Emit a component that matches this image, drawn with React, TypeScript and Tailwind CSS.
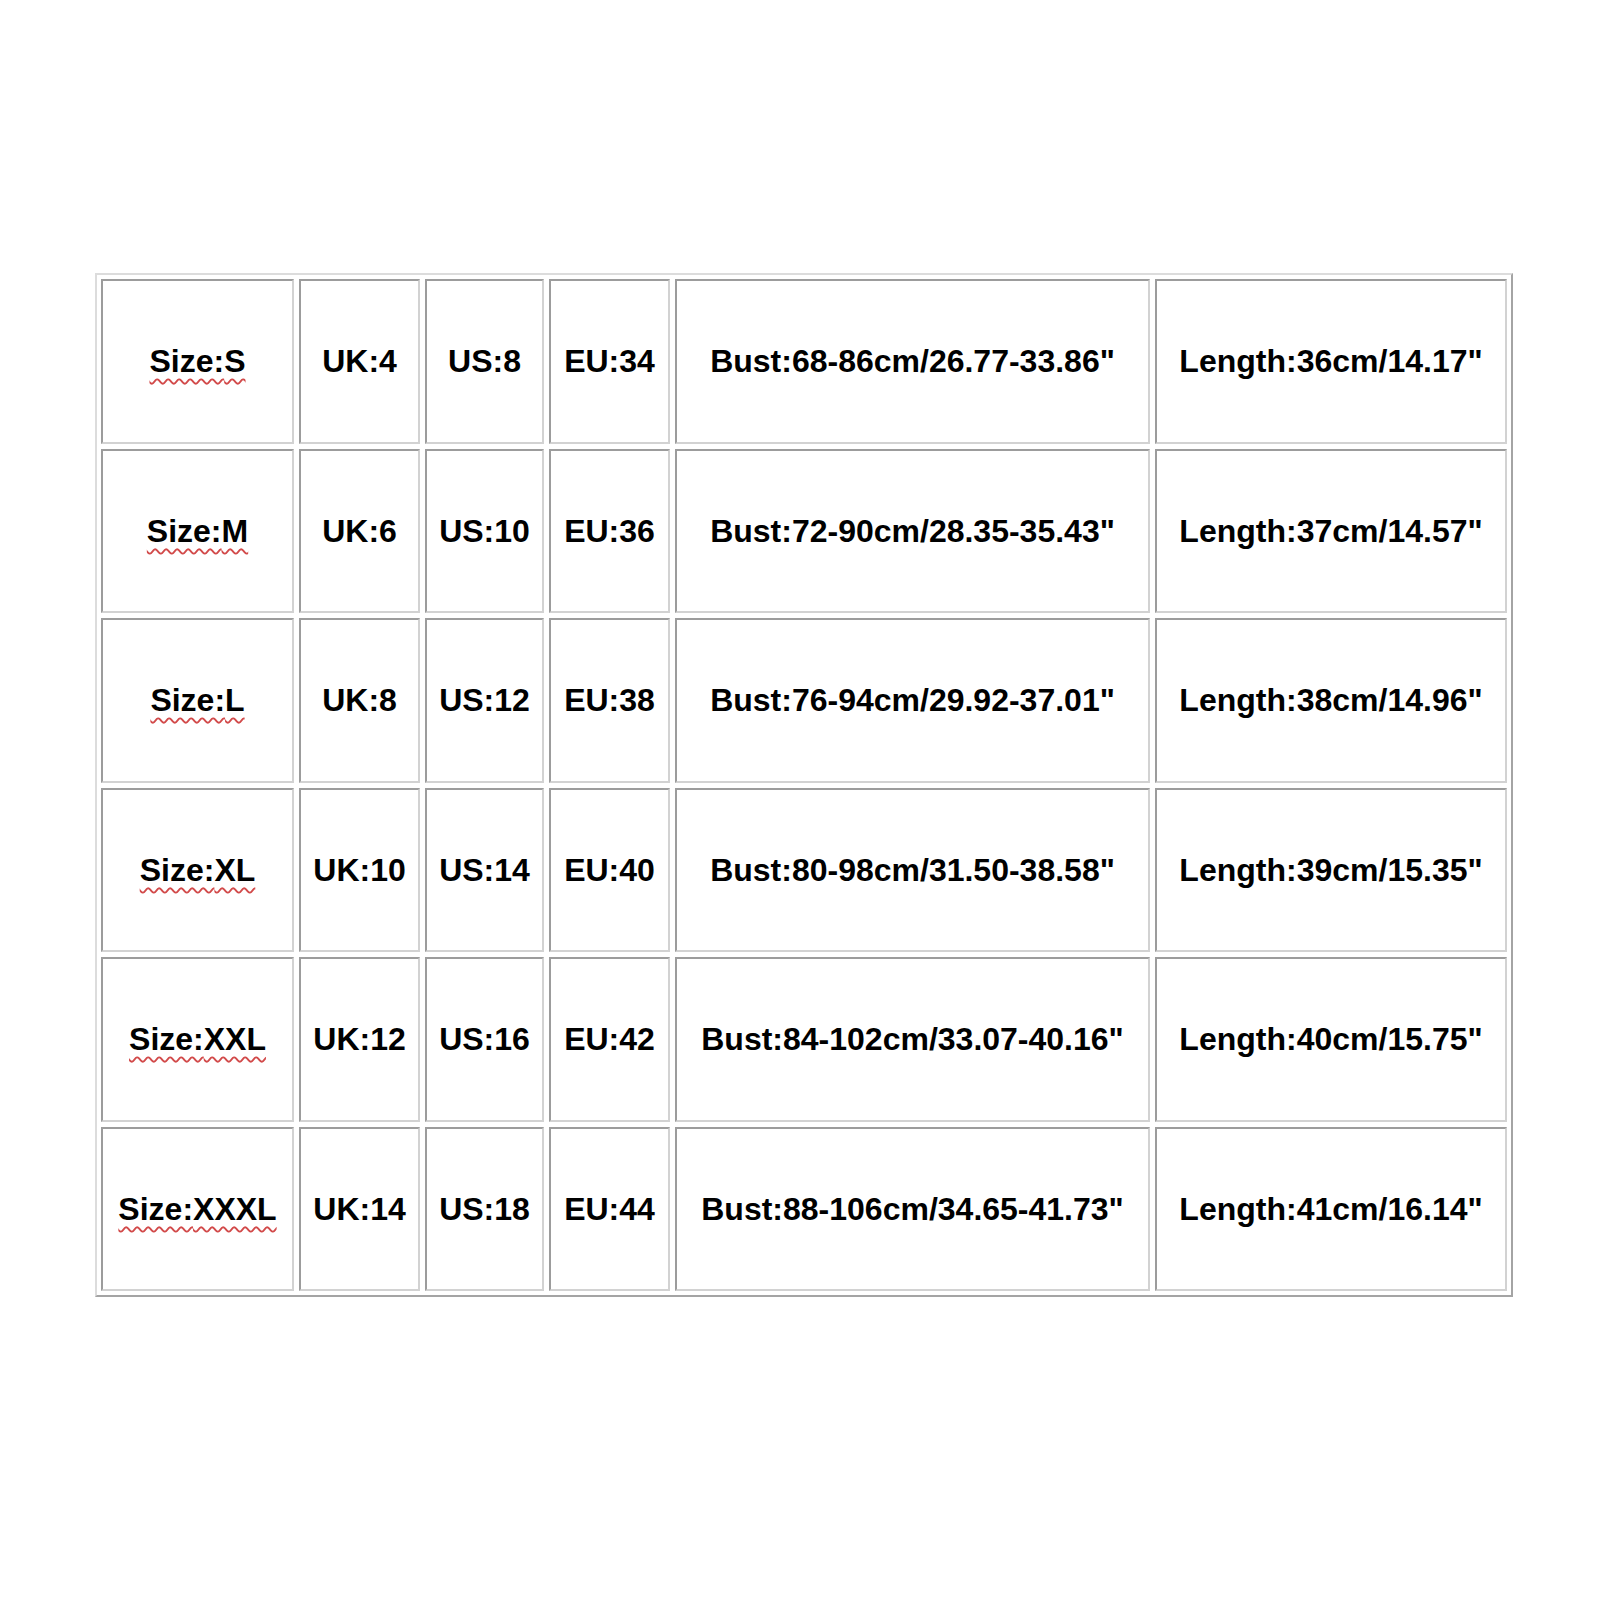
import React from 'react';

const rows = [
  ['S', 'UK:4', 'US:8', 'EU:34', 'Bust:68-86cm/26.77-33.86"', 'Length:36cm/14.17"'],
  ['M', 'UK:6', 'US:10', 'EU:36', 'Bust:72-90cm/28.35-35.43"', 'Length:37cm/14.57"'],
  ['L', 'UK:8', 'US:12', 'EU:38', 'Bust:76-94cm/29.92-37.01"', 'Length:38cm/14.96"'],
  ['XL', 'UK:10', 'US:14', 'EU:40', 'Bust:80-98cm/31.50-38.58"', 'Length:39cm/15.35"'],
  ['XXL', 'UK:12', 'US:16', 'EU:42', 'Bust:84-102cm/33.07-40.16"', 'Length:40cm/15.75"'],
  ['XXXL', 'UK:14', 'US:18', 'EU:44', 'Bust:88-106cm/34.65-41.73"', 'Length:41cm/16.14"'],
];

const cell =
  'flex items-center justify-center border-2 border-t-[#9c9c9c] border-l-[#9c9c9c] border-r-[#d2d2d2] border-b-[#d2d2d2] bg-white';

export default function App() {
  return (
    <div className="w-[1600px] h-[1600px] bg-white pt-[273px] pl-[95px] font-['Liberation_Sans',Arial,sans-serif] font-bold text-[32px] text-black">
      {/* size chart */}
      <div className="inline-block border-2 border-t-[#dcdcdc] border-l-[#dcdcdc] border-r-[#a4a4a4] border-b-[#a4a4a4] p-[4px]">
        <div className="grid grid-cols-[193px_121px_119px_121px_475px_352px] auto-rows-[164.5px] gap-[5px]">
          {rows.map(r => (
            <React.Fragment key={r[0]}>
              <div className={cell}>
                <span className="underline decoration-wavy decoration-[#d24a4a] decoration-[1.5px] underline-offset-[6px]">
                  Size:{r[0]}
                </span>
              </div>
              {r.slice(1).map((v, i) => (
                <div key={i} className={cell}>
                  {v}
                </div>
              ))}
            </React.Fragment>
          ))}
        </div>
      </div>
    </div>
  );
}
